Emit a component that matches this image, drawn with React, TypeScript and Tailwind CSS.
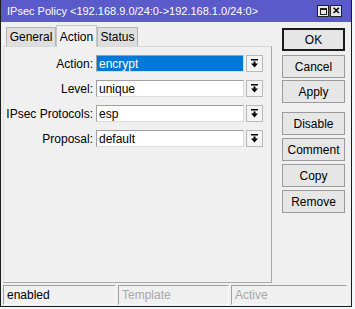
import React from "react";

const font = { fontFamily: '"Liberation Sans", Arial, sans-serif' };

const fields = [
  { label: "Action:", value: "encrypt", selected: true },
  { label: "Level:", value: "unique" },
  { label: "IPsec Protocols:", value: "esp" },
  { label: "Proposal:", value: "default" },
];

const DropIcon = () => (
  <svg width="9" height="9" viewBox="0 0 9 9">
    <rect x="1" y="0" width="7" height="1.5" fill="#000" />
    <rect x="3.5" y="2.5" width="2" height="2.5" fill="#000" />
    <polygon points="1,4.5 8,4.5 4.5,8.5" fill="#000" />
  </svg>
);

const Button = ({ label, primary }: { label: string; primary?: boolean }) => (
  <div
    className={
      "flex h-[23px] w-[63px] items-center justify-center bg-[#e6e6e6] text-[12px] text-black " +
      (primary ? "border-2 border-[#1a1a1a]" : "border border-[#9a9a9a]")
    }
  >
    {label}
  </div>
);

export default function App() {
  return (
    <div className="h-[309px] w-[355px] bg-[#f6f7f9]" style={font}>
      <div className="flex h-[307px] w-[352px] flex-col border-x border-b border-[#1c1c1c] bg-[#f0f0f0]">
        {/* title bar */}
        <div className="flex h-[22px] items-center justify-between bg-[#5a5acb] pl-[6px] pr-[9px]">
          <span className="text-[11px] text-white">IPsec Policy &lt;192.168.9.0/24:0-&gt;192.168.1.0/24:0&gt;</span>
          <div className="flex gap-[1px]">
            <div className="flex h-[12px] w-[12px] items-center justify-center border border-[#222] bg-[#e8e8e8]">
              <div className="h-[7px] w-[7px] border border-[#222] border-t-2" />
            </div>
            <div className="flex h-[12px] w-[12px] items-center justify-center border border-[#222] bg-[#e8e8e8] text-[10px] font-bold leading-none text-black">
              ✕
            </div>
          </div>
        </div>

        <div className="flex flex-1 pl-[2px] pr-[6px]">
          {/* left: tabs + panel */}
          <div className="flex w-[270px] flex-col pt-[3px]">
            <div className="flex h-[21px] items-end pl-[3px]">
              <div className="flex h-[19px] w-[50px] items-center justify-center border border-b-0 border-[#b4b4b4] bg-[#dedede] text-[12px]">
                General
              </div>
              <div className="relative -mb-px flex h-[22px] w-[41px] items-start justify-center border border-b-0 border-[#c8c8c8] bg-[#f0f0f0] pt-[2px] text-[12px]">
                Action
              </div>
              <div className="flex h-[19px] w-[41px] items-center justify-center border border-b-0 border-[#b4b4b4] bg-[#dedede] text-[12px]">
                Status
              </div>
            </div>
            <div className="flex h-[237px] flex-col gap-[8px] border border-[#a8a8a8] border-l-[#e0e0e0] border-t-[#d8d8d8] pt-[8px]">
              {fields.map((f) => (
                <div key={f.label} className="flex h-[17px] items-center">
                  <div className="w-[89px] text-right text-[12px] text-black">{f.label}</div>
                  <div
                    className={
                      "ml-[3px] flex h-[17px] w-[148px] items-center border border-[#a0a0a0] border-b-[#dcdcdc] border-r-[#dcdcdc] pl-[2px] text-[12px] " +
                      (f.selected ? "bg-[#0078d7] text-white" : "bg-white text-black")
                    }
                  >
                    {f.value}
                  </div>
                  <div className="ml-[2px] flex h-[17px] w-[17px] items-center justify-center border border-[#b8b8b8] bg-[#f4f4f4]">
                    <DropIcon />
                  </div>
                </div>
              ))}
            </div>
          </div>

          {/* right: buttons */}
          <div className="ml-[10px] flex flex-col pt-[6px]">
            <Button label="OK" primary />
            <div className="mt-[4px] flex flex-col gap-[2px]">
              <Button label="Cancel" />
              <Button label="Apply" />
            </div>
            <div className="mt-[9px] flex flex-col gap-[3px]">
              <Button label="Disable" />
              <Button label="Comment" />
              <Button label="Copy" />
              <Button label="Remove" />
            </div>
          </div>
        </div>

        {/* status bar */}
        <div className="mb-[1px] flex h-[20px] gap-[2px] pl-[2px] pr-[4px] text-[12px]">
          <div className="flex w-[113px] items-center border border-[#a0a0a0] border-b-[#f8f8f8] border-r-[#f8f8f8] pl-[3px] text-black">
            enabled
          </div>
          <div className="flex w-[111px] items-center border border-[#a0a0a0] border-b-[#f8f8f8] border-r-[#f8f8f8] pl-[3px] text-[#a8a8a8]">
            Template
          </div>
          <div className="flex flex-1 items-center border border-[#a0a0a0] border-b-[#f8f8f8] border-r-[#f8f8f8] pl-[3px] text-[#a8a8a8]">
            Active
          </div>
        </div>
      </div>
    </div>
  );
}
